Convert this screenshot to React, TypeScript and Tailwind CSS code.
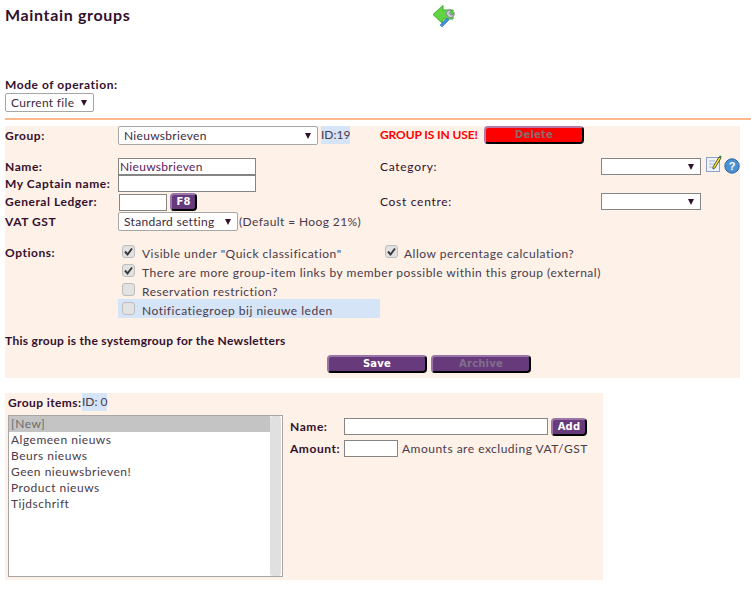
import type { ReactNode } from 'react';

const font = { fontFamily: 'Lato, "Open Sans", sans-serif' };

function Arrow() {
  return <span className="w-0 h-0 border-x-[3.5px] border-x-transparent border-t-[6px] border-t-[#33102d]" />;
}

// Looks like a native select, the arrow sits at the right edge
function FakeSelect({ value, className, square }: { value?: string; className: string; square?: boolean }) {
  return (
    <div className={`flex items-center justify-between bg-white pl-[5px] pr-[6px] border ${square ? 'border-[#858585]' : 'border-[#a6a6a6] rounded-[2px]'} ${className}`}>
      <span className="text-[#3d2a3d] tracking-[0.3px]">{value}</span>
      <Arrow />
    </div>
  );
}

function Check({ on }: { on?: boolean }) {
  return (
    <span className="flex items-center justify-center w-[13px] h-[13px] -mt-[5px] rounded-[3px] border border-[#bdbdbd] bg-[#e2e2e2] shrink-0">
      {on && (
        <svg width="11" height="11" viewBox="0 0 11 11">
          <path d="M2 5.5 L4.5 8.5 L9 2.5" fill="none" stroke="#3a3a3a" strokeWidth="2" />
        </svg>
      )}
    </span>
  );
}

function Btn({ children, className, dim }: { children: ReactNode; className: string; dim?: boolean }) {
  return (
    <button
      className={`flex items-center justify-center h-[18px] rounded-[4px] border-2 border-t-[#9a76a8] border-l-[#9a76a8] border-r-black border-b-black bg-[#673a7c] text-[10px] font-bold tracking-[0.2px] ${dim ? 'text-[#80708a]' : 'text-white'} ${className}`}
      style={{ fontFamily: '"DejaVu Sans", sans-serif' }}
    >
      {children}
    </button>
  );
}

function BackIcon() {
  return (
    <svg width="24" height="24" viewBox="0 0 24 24" className="-mt-[1px]">
      <path d="M1 10.5 L11 1.5 L11 6 L21 6 L21 15 L11 15 L11 20 Z" fill="#62d444" stroke="#3fae30" strokeWidth="1" />
      <path d="M14 10 a4 4 0 0 1 6 -3.4 l-2.4 2 1 2.2 2.4 0 1 -2.4 a4 4 0 0 1 -5 5.2 z" fill="#c9cdd0" stroke="#7b8388" strokeWidth="1" />
      <path d="M8 21 L15 14 L17 16 L10 23 Z" fill="#3f8fe0" stroke="#2a6db5" strokeWidth="0.5" />
    </svg>
  );
}

function NoteIcon() {
  return (
    <svg width="16" height="18" viewBox="0 0 16 18">
      <rect x="0.5" y="2.5" width="13" height="14" fill="#eef3fa" stroke="#8f9fc8" />
      <path d="M3 6h6M3 9h5M3 12h4" stroke="#a9b4cf" />
      <path d="M7 12 L13 2 L15 3 L9 13 L7 14 Z" fill="#f2e21c" stroke="#222" strokeWidth="0.7" />
      <path d="M13 2 L14 0.5 L15.5 1.5 L15 3 Z" fill="#1f7a2a" />
    </svg>
  );
}

function HelpIcon() {
  return (
    <svg width="16" height="16" viewBox="0 0 16 16">
      <circle cx="8" cy="8" r="7.2" fill="#4a8fd0" stroke="#2a68a8" />
      <text x="8" y="12" textAnchor="middle" fontSize="11" fontWeight="bold" fill="#fff" fontFamily="Liberation Sans, sans-serif">?</text>
    </svg>
  );
}

const items = ['[New]', 'Algemeen nieuws', 'Beurs nieuws', 'Geen nieuwsbrieven!', 'Product nieuws', 'Tijdschrift'];

export default function App() {
  const label = 'font-bold text-[#33102d] tracking-[0.55px]';
  const text = 'text-[#4a3a4a] tracking-[0.5px]';
  const input = 'bg-white border border-[#858585] outline-none px-[1px] text-[#5b1a5b] tracking-[0.3px]';

  return (
    <div className="w-[751px] h-[592px] bg-white text-[12px] leading-[16px] overflow-hidden" style={font}>
      {/* Header */}
      <div className="flex h-[30px] pl-[5px] pt-[5px]">
        <h1 className="w-[427px] text-[16px] leading-[20px] font-bold text-[#33102d] tracking-[0.65px]">Maintain groups</h1>
        <BackIcon />
      </div>

      {/* Mode */}
      <div className="pl-[5px] pt-[47px]">
        <div className={`${label} h-[16px]`}>Mode of operation:</div>
        <FakeSelect value="Current file" className="w-[89px] h-[19px]" />
      </div>
      <div className="ml-[5px] mt-[6px] h-[2px] bg-[#ffb98a]" />

      {/* Main panel */}
      <div className="ml-[5px] mt-[6px] w-[735px] h-[252px] bg-[#fdf1e8]">
        <div className="flex items-start h-[32px]">
          <div className={`${label} w-[113px] h-[19px] flex items-center`}>Group:</div>
          <FakeSelect value="Nieuwsbrieven" className="w-[200px] h-[19px]" />
          <span className="ml-[3px] h-[18px] flex items-center bg-[#d5e5f7] text-[#4a3a4a] w-[29px]">ID:19</span>
          <span className="ml-[30px] w-[104px] h-[18px] flex items-center font-bold text-[#f00] -tracking-[0.1px]">GROUP IS IN USE!</span>
          <Btn dim className="w-[100px] !bg-[#f00] !border-t-[#b77aa8] !border-l-[#b77aa8] !text-[#8a6a6a]">Delete</Btn>
        </div>

        <div className="flex">
          <div className="w-[375px]">
            <div className="flex items-center h-[17px]">
              <div className={`${label} w-[113px]`}>Name:</div>
              <input className={`${input} w-[138px] h-[17px]`} defaultValue="Nieuwsbrieven" />
            </div>
            <div className="flex items-center h-[17px]">
              <div className={`${label} w-[113px] whitespace-nowrap`}>My Captain name:</div>
              <input className={`${input} w-[138px] h-[17px]`} />
            </div>
            <div className="flex items-center h-[18px] mt-px">
              <div className={`${label} w-[114px]`}>General Ledger:</div>
              <input className={`${input} w-[48px] h-[17px]`} />
              <Btn className="ml-[3px] w-[27px]">F8</Btn>
            </div>
            <div className="flex items-center h-[19px] mt-px">
              <div className={`${label} w-[113px]`}>VAT GST</div>
              <FakeSelect value="Standard setting" className="w-[120px] h-[19px]" />
              <span className="ml-px text-[#4a3a4a] tracking-[0.4px]">(Default = Hoog 21%)</span>
            </div>
          </div>
          <div className="w-[360px]">
            <div className="flex items-center h-[17px]">
              <div className="w-[221px] text-[#33102d] tracking-[0.7px]">Category:</div>
              <FakeSelect square className="w-[100px] h-[17px]" />
              <span className="ml-[5px] flex items-start gap-[2px] -mt-[4px]">
                <NoteIcon />
                <span className="mt-[3px]"><HelpIcon /></span>
              </span>
            </div>
            <div className="flex items-center h-[17px] mt-[18px]">
              <div className="w-[221px] text-[#33102d] tracking-[0.7px]">Cost centre:</div>
              <FakeSelect square className="w-[100px] h-[17px]" />
            </div>
          </div>
        </div>

        {/* Options */}
        <div className="flex mt-[11px]">
          <div className={`${label} w-[113px] h-[19px] pt-[3px]`}>Options:</div>
          <div className="flex flex-col">
            <div className="flex items-center h-[19px] pl-[4px] pt-[4px]">
              <Check on />
              <span className={`${text} ml-[7px] w-[243px]`}>Visible under "Quick classification"</span>
              <Check on />
              <span className={`${text} ml-[6px]`}>Allow percentage calculation?</span>
            </div>
            <div className="flex items-center h-[19px] pl-[4px] pt-[4px]">
              <Check on />
              <span className={`${text} ml-[7px] whitespace-nowrap`}>There are more group-item links by member possible within this group (external)</span>
            </div>
            <div className="flex items-center h-[19px] pl-[4px] pt-[4px]">
              <Check />
              <span className={`${text} ml-[7px]`}>Reservation restriction?</span>
            </div>
            <div className="flex items-center h-[19px] pl-[4px] pt-[4px] w-[262px] bg-[#d5e5f7]">
              <Check />
              <span className={`${text} ml-[7px]`}>Notificatiegroep bij nieuwe leden</span>
            </div>
          </div>
        </div>

        <div className="font-bold text-[#33102d] tracking-[0.3px] mt-[15px]">This group is the systemgroup for the Newsletters</div>
        <div className="flex gap-[4px] ml-[322px] mt-[6px]">
          <Btn className="w-[100px]">Save</Btn>
          <Btn dim className="w-[100px]">Archive</Btn>
        </div>
      </div>

      {/* Group items */}
      <div className="flex ml-[5px] mt-[15px] w-[598px] h-[187px] bg-[#fdf1e8] pl-[3px]">
        <div className="w-[275px]">
          <div className="flex h-[22px] items-start">
            <span className={`${label} pt-[2px] w-[74px] whitespace-nowrap !tracking-[0.4px]`}>Group items:</span>
            <span className="h-[18px] w-[25px] flex items-center bg-[#d5e5f7] text-[#4a3a4a] whitespace-nowrap">ID: 0</span>
          </div>
          <div className="flex justify-between w-[275px] h-[162px] bg-white border border-[#a6a6a6]">
            <div className="flex-1">
              {items.map((it, i) => (
                <div key={it} className={`h-[16px] pl-[2px] flex items-center ${text} ${i === 0 ? 'bg-[#c4c4c4] !text-[#6a6a6a]' : ''}`}>{it}</div>
              ))}
            </div>
            <div className="w-[11px] mr-px bg-[#e0e0e0] rounded-[3px]" />
          </div>
        </div>

        <div className="ml-[7px] pt-[25px]">
          <div className="flex items-center h-[17px]">
            <div className={`${label} w-[54px]`}>Name:</div>
            <input className={`${input} w-[204px] h-[17px]`} />
            <Btn className="ml-[3px] w-[36px]">Add</Btn>
          </div>
          <div className="flex items-center h-[17px] mt-[5px]">
            <div className={`${label} w-[54px]`}>Amount:</div>
            <input className={`${input} w-[54px] h-[17px]`} />
            <span className={`${text} ml-[4px] whitespace-nowrap`}>Amounts are excluding VAT/GST</span>
          </div>
        </div>
      </div>
    </div>
  );
}
